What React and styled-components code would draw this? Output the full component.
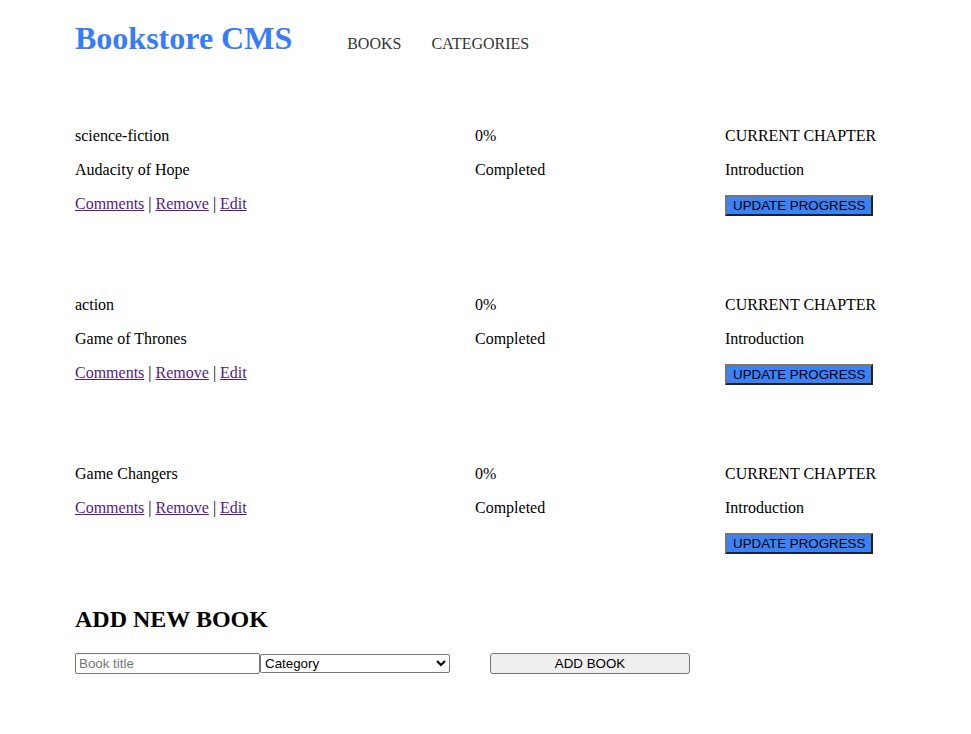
import React from "react";
import styled, { createGlobalStyle } from "styled-components";

const GlobalStyle = createGlobalStyle`
body {
  margin: 0;
  font-family: "Liberation Serif", "Times New Roman", serif;
  font-size: 16px;
  color: #000;
  background: #fff;
}
`

const Page = styled.div`
padding: 0 75px;
`

const Header = styled.header`
display: flex;
align-items: baseline;
padding-top: 20px;
`

const Title = styled.h1`
margin: 0 55px 0 0;
font-size: 32px;
font-weight: bold;
line-height: normal;
color: #377dfb;
`

const Nav = styled.nav`
display: flex;
gap: 30px;
`

const NavLink = styled.a`
color: #333;
text-decoration: none;
font-size: 16px;
`

const BookList = styled.ul`
list-style: none;
margin: 70px 0 0;
padding: 0;
display: flex;
flex-direction: column;
gap: 80px;
`

const Book = styled.li`
display: grid;
grid-template-columns: 400px 250px 1fr;
line-height: 18px;
`

const Column = styled.div`
display: flex;
flex-direction: column;
align-items: flex-start;
gap: 16px;
`

const Line = styled.span`
display: block;
`

const Actions = styled.div`
display: flex;
gap: 4px;
`

const ActionLink = styled.a`
color: #551a8b;
text-decoration: underline;
`

const ProgressButton = styled.button`
font-family: Arial, "Liberation Sans", sans-serif;
font-size: 13.333px;
line-height: normal;
padding: 1px 6px;
border: 2px outset #767676;
background-color: #3b82f6;
color: #000;
`

const AddSection = styled.section`
margin-top: 51px;
`

const Heading = styled.h2`
margin: 0;
font-size: 24px;
line-height: 28px;
font-weight: bold;
`

const Form = styled.form`
display: flex;
align-items: center;
margin-top: 20px;
`

const TitleInput = styled.input`
box-sizing: border-box;
width: 185px;
height: 21px;
font-family: Arial, "Liberation Sans", sans-serif;
font-size: 13.333px;
padding: 1px 3px;
border: 1px solid #767676;
border-radius: 2px;
&::placeholder {
  color: #757575;
}
`

const CategorySelect = styled.select`
box-sizing: border-box;
width: 190px;
height: 19px;
font-family: Arial, "Liberation Sans", sans-serif;
font-size: 13.333px;
border: 1px solid #767676;
border-radius: 2px;
background: #fff;
color: #000;
`

const AddButton = styled.button`
box-sizing: border-box;
width: 200px;
height: 21px;
margin-left: 40px;
font-family: Arial, "Liberation Sans", sans-serif;
font-size: 13.333px;
padding: 1px 6px;
border: 1px solid #767676;
border-radius: 3px;
background-color: #efefef;
color: #000;
`

const books = [
  { id: 1, category: "science-fiction", title: "Audacity of Hope" },
  { id: 2, category: "action", title: "Game of Thrones" },
  { id: 3, category: null, title: "Game Changers" },
]

const stop = (e) => e.preventDefault()

const App = () => (
  <Page>
    <GlobalStyle />
    <Header>
      <Title>Bookstore CMS</Title>
      <Nav>
        <NavLink href="/" onClick={stop}>BOOKS</NavLink>
        <NavLink href="/categories" onClick={stop}>CATEGORIES</NavLink>
      </Nav>
    </Header>

    <BookList>
      {books.map(({ id, category, title }) => (
        <Book key={id}>
          <Column>
            {category && <Line>{category}</Line>}
            <Line>{title}</Line>
            <Actions>
              <ActionLink href="#" onClick={stop}>Comments</ActionLink>|
              <ActionLink href="#" onClick={stop}>Remove</ActionLink>|
              <ActionLink href="#" onClick={stop}>Edit</ActionLink>
            </Actions>
          </Column>
          <Column>
            <Line>0%</Line>
            <Line>Completed</Line>
          </Column>
          <Column>
            <Line>CURRENT CHAPTER</Line>
            <Line>Introduction</Line>
            <ProgressButton type="button">UPDATE PROGRESS</ProgressButton>
          </Column>
        </Book>
      ))}
    </BookList>

    <AddSection>
      <Heading>ADD NEW BOOK</Heading>
      <Form onSubmit={stop}>
        <TitleInput type="text" placeholder="Book title" />
        <CategorySelect defaultValue="">
          <option value="">Category</option>
          <option value="action">Action</option>
          <option value="science-fiction">Science Fiction</option>
        </CategorySelect>
        <AddButton type="submit">ADD BOOK</AddButton>
      </Form>
    </AddSection>
  </Page>
)

export default App;
